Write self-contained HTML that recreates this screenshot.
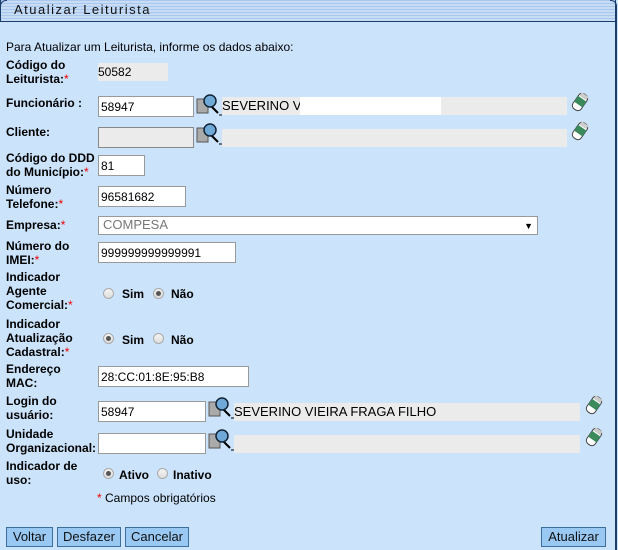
<!DOCTYPE html><html><head><meta charset="utf-8"><style>
body{margin:0;width:618px;height:550px;background:#cbe3fb;font-family:"Liberation Sans",Arial,sans-serif;font-size:12px;color:#000;position:relative;overflow:hidden}
.a{position:absolute}
.l{position:absolute;font-weight:bold;line-height:14px;left:6px}
.r{color:#e00;font-weight:normal}
.in{position:absolute;background:#fff;border:1px solid #999;box-sizing:border-box;height:21px;padding:3px 2px;font-size:12px;line-height:14px}
.g{position:absolute;background:#ebebeb;height:18px;font-size:13px;line-height:18px}
.rad{position:absolute;width:11px;height:11px;border-radius:50%;border:1px solid #aaa;background:linear-gradient(#f4f4f4,#ddd);box-sizing:border-box}
.rad.on::after{content:"";position:absolute;left:2px;top:2px;width:5px;height:5px;border-radius:50%;background:#555}
.rt{position:absolute;font-weight:bold;font-size:12px}
.btn{position:absolute;top:527px;height:20px;background:#99c8f3;border:1px solid #3c6e9e;box-sizing:border-box;font-size:13px;line-height:18px;text-align:center;color:#111}
</style></head><body>
<div class="a" style="left:0;top:0;width:614px;height:21px;border:1px solid #1a3d6e;border-top:none;background:repeating-linear-gradient(#a9c8ee 0,#a9c8ee 1px,#c8dcf5 1px,#c8dcf5 3px)"></div>
<div class="a" style="left:0;top:0;width:6px;height:21px;border-left:1px solid #1a3d6e;border-top:1px solid #1a3d6e;border-radius:6px 0 0 0"></div>
<div class="a" style="left:610px;top:0;width:6px;height:21px;border-right:1px solid #1a3d6e;border-top:1px solid #1a3d6e;border-radius:0 6px 0 0"></div>
<div class="a" style="left:14px;top:2px;font-size:13px;letter-spacing:1.5px;color:#111">Atualizar Leiturista</div>
<div class="a" style="left:615px;top:21px;width:2px;height:529px;background:#1a3d6e"></div>

<div class="a" style="left:6px;top:40px">Para Atualizar um Leiturista, informe os dados abaixo:</div>
<div class="l" style="top:58px">Código do<br>Leiturista:<span class="r">*</span></div>
<div class="g" style="left:98px;top:63px;width:70px;font-size:12px">50582</div>

<div class="l" style="top:96px">Funcionário :</div>
<div class="in" style="left:98px;top:96px;width:96px">58947</div>
<svg class="a" style="left:196px;top:93px" width="26" height="24"><rect x="1" y="6" width="11" height="14" fill="#aaa" stroke="#555"/><line x1="13" y1="11" x2="22" y2="20" stroke="#000" stroke-width="2"/><circle cx="14" cy="8" r="6" fill="#6fa9d8" stroke="#123" stroke-width="1.5"/><line x1="23" y1="22" x2="26" y2="22" stroke="#000"/></svg>
<div class="g" style="left:222px;top:97px;width:345px">SEVERINO V</div>
<div class="a" style="left:300px;top:97px;width:141px;height:18px;background:#fff"></div>
<svg class="a" style="left:570px;top:92px" width="20" height="20"><g transform="rotate(35 10 10)"><rect x="5" y="1" width="10" height="18" rx="4" fill="#fff" stroke="#444"/><rect x="5" y="6" width="10" height="7" fill="#3a8a5c"/><rect x="6" y="1" width="8" height="4" fill="#ccc"/></g></svg>

<div class="l" style="top:125px">Cliente:</div>
<div class="in" style="left:98px;top:127px;width:96px;background:#ebebeb;border-color:#888"></div>
<svg class="a" style="left:196px;top:122px" width="26" height="24"><rect x="1" y="6" width="11" height="14" fill="#aaa" stroke="#555"/><line x1="13" y1="11" x2="22" y2="20" stroke="#000" stroke-width="2"/><circle cx="14" cy="8" r="6" fill="#6fa9d8" stroke="#123" stroke-width="1.5"/><line x1="23" y1="22" x2="26" y2="22" stroke="#000"/></svg>
<div class="g" style="left:222px;top:129px;width:345px"></div>
<svg class="a" style="left:570px;top:121px" width="20" height="20"><g transform="rotate(35 10 10)"><rect x="5" y="1" width="10" height="18" rx="4" fill="#fff" stroke="#444"/><rect x="5" y="6" width="10" height="7" fill="#3a8a5c"/><rect x="6" y="1" width="8" height="4" fill="#ccc"/></g></svg>

<div class="l" style="top:151px">Código do DDD<br>do Município:<span class="r">*</span></div>
<div class="in" style="left:98px;top:155px;width:47px">81</div>
<div class="l" style="top:183px">Número<br>Telefone:<span class="r">*</span></div>
<div class="in" style="left:98px;top:186px;width:88px">96581682</div>
<div class="l" style="top:218px">Empresa:<span class="r">*</span></div>
<div class="in" style="left:98px;top:216px;width:440px;height:19px;padding:1px 4px;font-size:13px;color:#777">COMPESA<span style="position:absolute;right:4px;top:2px;color:#000;font-size:9px">▼</span></div>
<div class="l" style="top:239px">Número do<br>IMEI:<span class="r">*</span></div>
<div class="in" style="left:98px;top:242px;width:138px">999999999999991</div>

<div class="l" style="top:270px">Indicador<br>Agente<br>Comercial:<span class="r">*</span></div>
<div class="rad" style="left:103px;top:288px"></div><div class="rt" style="left:122px;top:287px">Sim</div>
<div class="rad on" style="left:153px;top:288px"></div><div class="rt" style="left:171px;top:287px">Não</div>
<div class="l" style="top:317px">Indicador<br>Atualização<br>Cadastral:<span class="r">*</span></div>
<div class="rad on" style="left:103px;top:333px"></div><div class="rt" style="left:122px;top:333px">Sim</div>
<div class="rad" style="left:153px;top:333px"></div><div class="rt" style="left:171px;top:333px">Não</div>

<div class="l" style="top:362px">Endereço<br>MAC:</div>
<div class="in" style="left:98px;top:366px;width:151px">28:CC:01:8E:95:B8</div>

<div class="l" style="top:394px">Login do<br>usuário:</div>
<div class="in" style="left:98px;top:401px;width:108px">58947</div>
<svg class="a" style="left:208px;top:396px" width="26" height="24"><rect x="1" y="6" width="11" height="14" fill="#aaa" stroke="#555"/><line x1="13" y1="11" x2="22" y2="20" stroke="#000" stroke-width="2"/><circle cx="14" cy="8" r="6" fill="#6fa9d8" stroke="#123" stroke-width="1.5"/><line x1="23" y1="22" x2="26" y2="22" stroke="#000"/></svg>
<div class="g" style="left:234px;top:403px;width:346px">SEVERINO VIEIRA FRAGA FILHO</div>
<svg class="a" style="left:584px;top:395px" width="20" height="20"><g transform="rotate(35 10 10)"><rect x="5" y="1" width="10" height="18" rx="4" fill="#fff" stroke="#444"/><rect x="5" y="6" width="10" height="7" fill="#3a8a5c"/><rect x="6" y="1" width="8" height="4" fill="#ccc"/></g></svg>

<div class="l" style="top:427px">Unidade<br>Organizacional:</div>
<div class="in" style="left:98px;top:433px;width:108px"></div>
<svg class="a" style="left:208px;top:428px" width="26" height="24"><rect x="1" y="6" width="11" height="14" fill="#aaa" stroke="#555"/><line x1="13" y1="11" x2="22" y2="20" stroke="#000" stroke-width="2"/><circle cx="14" cy="8" r="6" fill="#6fa9d8" stroke="#123" stroke-width="1.5"/><line x1="23" y1="22" x2="26" y2="22" stroke="#000"/></svg>
<div class="g" style="left:234px;top:435px;width:346px"></div>
<svg class="a" style="left:584px;top:427px" width="20" height="20"><g transform="rotate(35 10 10)"><rect x="5" y="1" width="10" height="18" rx="4" fill="#fff" stroke="#444"/><rect x="5" y="6" width="10" height="7" fill="#3a8a5c"/><rect x="6" y="1" width="8" height="4" fill="#ccc"/></g></svg>

<div class="l" style="top:459px">Indicador de<br>uso:</div>
<div class="rad on" style="left:103px;top:468px"></div><div class="rt" style="left:119px;top:468px">Ativo</div>
<div class="rad" style="left:157px;top:468px"></div><div class="rt" style="left:173px;top:468px">Inativo</div>
<div class="a" style="left:97px;top:491px"><span class="r">*</span> Campos obrigatórios</div>

<div class="btn" style="left:6px;width:47px">Voltar</div>
<div class="btn" style="left:57px;width:64px">Desfazer</div>
<div class="btn" style="left:125px;width:64px">Cancelar</div>
<div class="btn" style="left:541px;width:65px">Atualizar</div>
</body></html>
